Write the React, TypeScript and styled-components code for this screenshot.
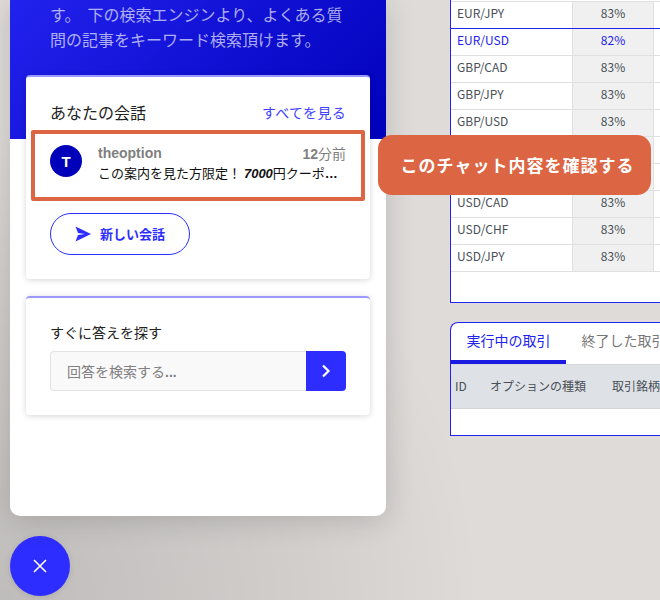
import styled, { createGlobalStyle } from 'styled-components'

const blue = '#2d2dff'
const orange = '#dc6543'
const jp = `'Noto Sans CJK JP', 'Noto Sans', sans-serif`
const latin = `'Liberation Sans', 'Noto Sans CJK JP', sans-serif`

const GlobalStyle = createGlobalStyle`
  html, body { margin: 0; padding: 0; }
  body { font-family: ${jp}; background: #dedbd9; }
`

const Page = styled.div`
  position: relative;
  display: flex;
  width: 660px;
  height: 600px;
  overflow: hidden;
  background:
    radial-gradient(circle at 0 100%, rgba(0, 0, 0, 0.14) 0, rgba(0, 0, 0, 0.06) 300px, rgba(0, 0, 0, 0) 480px),
    #dedbd9;
`

const WidgetColumn = styled.div`
  display: flex;
  flex-direction: column;
  flex: none;
  width: 376px;
  margin-left: 10px;
`

const Messenger = styled.div`
  position: relative;
  height: 516px;
  background: #fff;
  border-radius: 0 0 10px 10px;
  box-shadow: 0 4px 30px rgba(0, 0, 0, 0.16);
`

const Hero = styled.div`
  box-sizing: border-box;
  height: 139px;
  padding: 2px 40px 0;
  background: linear-gradient(135deg, #2222ee 0%, #0000bb 100%);
  color: rgba(255, 255, 255, 0.66);
  font-size: 16px;
  line-height: 25px;
`

const Cards = styled.div`
  display: flex;
  flex-direction: column;
  gap: 17px;
  margin: -64px 16px 0;
`

const Card = styled.section<{ $height: number }>`
  box-sizing: border-box;
  height: ${({ $height }) => $height}px;
  padding: 0 24px;
  background: #fff;
  border-top: 2px solid #9999ff;
  border-radius: 4px;
  box-shadow: 0 1px 6px rgba(0, 0, 0, 0.16);
`

const CardHeader = styled.div`
  display: flex;
  align-items: center;
  justify-content: space-between;
  height: 24px;
  margin-top: 23px;
`

const CardTitle = styled.h2`
  margin: 0;
  font-size: 16px;
  font-weight: 400;
  color: #222;
`

const SeeAll = styled.a`
  font-size: 14px;
  letter-spacing: 0.3px;
  color: #4040ff;
`

const Conversation = styled.div`
  display: flex;
  gap: 16px;
  margin-top: 21px;
  height: 56px;
`

const Avatar = styled.div`
  display: flex;
  align-items: center;
  justify-content: center;
  flex: none;
  width: 32px;
  height: 32px;
  border-radius: 50%;
  background: #0000bb;
  color: #fff;
  font: 700 15px 'Liberation Sans', sans-serif;
`

const ConversationText = styled.div`
  flex: 1;
  min-width: 0;
  margin-top: -2px;
`

const ConversationTop = styled.div`
  display: flex;
  justify-content: space-between;
  height: 20px;
  font-size: 14px;
  line-height: 20px;
  color: #7f7f7f;
`

const Sender = styled.span`
  font: 700 14px/20px 'Liberation Sans', sans-serif;
`

const Digits = styled.b`
  font-family: 'Liberation Sans', sans-serif;
`

const Preview = styled.div`
  overflow: hidden;
  white-space: nowrap;
  text-overflow: ellipsis;
  font-family: ${latin};
  font-size: 13px;
  font-weight: 700;
  line-height: 20px;
  color: #111;
`

const PreviewText = styled.span`
  font-family: ${jp};
  font-weight: 400;
`

const Coupon = styled.b`
  font-family: 'Liberation Sans', sans-serif;
  font-style: italic;
`

const NewChat = styled.button`
  display: flex;
  align-items: center;
  justify-content: center;
  gap: 9px;
  width: 140px;
  height: 42px;
  margin-top: 12px;
  padding: 0 0 1px;
  background: #fff;
  border: 1px solid ${blue};
  border-radius: 21px;
  color: ${blue};
  font: 700 13px ${jp};
`

const SearchLabel = styled.div`
  margin-top: 24px;
  font-size: 14px;
  line-height: 20px;
  color: #222;
`

const SearchRow = styled.div`
  display: flex;
  height: 40px;
  margin-top: 9px;
`

const SearchInput = styled.div`
  flex: 1;
  box-sizing: border-box;
  padding-left: 16px;
  background: #f9f9f9;
  border: 1px solid #e3e3e3;
  border-right: 0;
  border-radius: 4px 0 0 4px;
  color: #808080;
  font-size: 14px;
  line-height: 38px;
`

const SearchDots = styled.b`
  font-family: 'Liberation Sans', sans-serif;
`

const SearchButton = styled.button`
  display: flex;
  align-items: center;
  justify-content: center;
  width: 40px;
  padding: 0;
  background: ${blue};
  border: 0;
  border-radius: 0 4px 4px 0;
`

const Launcher = styled.button`
  display: flex;
  align-items: center;
  justify-content: center;
  width: 60px;
  height: 60px;
  margin-top: 20px;
  padding: 0;
  background: ${blue};
  border: 0;
  border-radius: 50%;
  box-shadow: 0 1px 6px rgba(0, 0, 0, 0.1);
`

const Highlight = styled.div`
  position: absolute;
  top: 130px;
  left: 31px;
  width: 334px;
  height: 71px;
  box-sizing: border-box;
  border: 4px solid ${orange};
  border-radius: 2px;
`

const Callout = styled.div`
  position: absolute;
  top: 135px;
  left: 378px;
  box-sizing: border-box;
  width: 273px;
  height: 60px;
  padding-left: 6px;
  border-radius: 14px;
  background: ${orange};
  color: #fff;
  font-size: 17px;
  font-weight: 700;
  letter-spacing: 1px;
  line-height: 60px;
  text-align: center;
`

const MarketColumn = styled.div`
  display: flex;
  flex-direction: column;
  flex: none;
  width: 320px;
  margin-left: 64px;
  color: #495057;
  font-size: 12px;
`

const RatesPanel = styled.div`
  box-sizing: border-box;
  height: 303px;
  padding-top: 1px;
  background: #fff;
  border: 1px solid #2222ee;
  border-width: 0 0 1px 1px;
`

const RateRow = styled.div<{ $active?: boolean }>`
  display: grid;
  grid-template-columns: 121px 82px 1fr;
  height: 27px;
  box-sizing: border-box;
  border-top: 1px solid ${({ $active }) => ($active ? '#2222ee' : '#e0e0e0')};
  color: ${({ $active }) => ($active ? '#2222ee' : 'inherit')};
  line-height: 22px;

  &:last-child {
    height: 28px;
    border-bottom: 1px solid #e0e0e0;
  }
`

const Pair = styled.div`
  padding-left: 6px;
`

const Payout = styled.div`
  background: #f0f0f0;
  border-left: 1px solid #e0e0e0;
  border-right: 1px solid #e0e0e0;
  text-align: center;
`

const TradesPanel = styled.div`
  box-sizing: border-box;
  height: 114px;
  margin-top: 19px;
  background: #fff;
  border: 1px solid #2222ee;
  border-right: 0;
  border-radius: 8px 0 0 0;
`

const Tabs = styled.div`
  display: flex;
  height: 41px;
  border-bottom: 1px solid #d8d8d8;
`

const Tab = styled.div<{ $active?: boolean }>`
  box-sizing: border-box;
  width: 115px;
  height: 41px;
  padding-top: 7px;
  text-align: center;
  font-size: 14px;
  line-height: 20px;
  color: ${({ $active }) => ($active ? '#2222ee' : '#777')};
  border-bottom: ${({ $active }) => ($active ? '4px solid #1a1ae0' : '0')};
`

const TradesHead = styled.div`
  display: flex;
  align-items: center;
  box-sizing: border-box;
  height: 44px;
  padding: 0 0 2px 4px;
  background: #dee2e6;
  border-bottom: 1px solid #d4d4d4;
  font-size: 12px;
  white-space: nowrap;
`

const HeadCell = styled.span<{ $width: number }>`
  flex: none;
  width: ${({ $width }) => $width}px;
`

const rates = [
  ['EUR/JPY', '83%'],
  ['EUR/USD', '82%'],
  ['GBP/CAD', '83%'],
  ['GBP/JPY', '83%'],
  ['GBP/USD', '83%'],
  ['NZD/USD', '83%'],
  ['USD/AUD', '83%'],
  ['USD/CAD', '83%'],
  ['USD/CHF', '83%'],
  ['USD/JPY', '83%'],
]

export default function App() {
  return (
    <Page>
      <GlobalStyle />
      <WidgetColumn>
        <Messenger>
          <Hero>
            す。&nbsp;&nbsp;下の検索エンジンより、よくある質
            <br />
            問の記事をキーワード検索頂けます。
          </Hero>
          <Cards>
            <Card $height={204}>
              <CardHeader>
                <CardTitle>あなたの会話</CardTitle>
                <SeeAll>すべてを見る</SeeAll>
              </CardHeader>
              <Conversation>
                <Avatar>T</Avatar>
                <ConversationText>
                  <ConversationTop>
                    <Sender>theoption</Sender>
                    <span>
                      <Digits>12</Digits>分前
                    </span>
                  </ConversationTop>
                  <Preview>
                    <PreviewText>
                      この案内を見た方限定！ <Coupon>7000</Coupon>円クーポンプレゼント
                    </PreviewText>
                  </Preview>
                </ConversationText>
              </Conversation>
              <NewChat>
                <svg width="16" height="16" viewBox="0 0 16 16" fill={blue}>
                  <path d="M0.5 0.5 L16 8 L0.5 15.5 L3 9 L10 8 L3 7 Z" />
                </svg>
                新しい会話
              </NewChat>
            </Card>
            <Card $height={119}>
              <SearchLabel>すぐに答えを探す</SearchLabel>
              <SearchRow>
                <SearchInput>
                  回答を検索する<SearchDots>...</SearchDots>
                </SearchInput>
                <SearchButton aria-label="検索">
                  <svg width="10" height="14" viewBox="0 0 10 14" fill="none" stroke="#fff" strokeWidth="2.2">
                    <path d="M2 1.5 L7.5 7 L2 12.5" />
                  </svg>
                </SearchButton>
              </SearchRow>
            </Card>
          </Cards>
        </Messenger>
        <Launcher aria-label="閉じる">
          <svg width="16" height="16" viewBox="0 0 16 16" fill="none" stroke="#fff" strokeWidth="1.6">
            <path d="M2 2 L14 14 M14 2 L2 14" />
          </svg>
        </Launcher>
      </WidgetColumn>
      <Highlight />
      <Callout>このチャット内容を確認する</Callout>
      <MarketColumn>
        <RatesPanel>
          {rates.map(([pair, payout]) => (
            <RateRow key={pair} $active={pair === 'EUR/USD'}>
              <Pair>{pair}</Pair>
              <Payout>{payout}</Payout>
              <div />
            </RateRow>
          ))}
        </RatesPanel>
        <TradesPanel>
          <Tabs>
            <Tab $active>実行中の取引</Tab>
            <Tab>終了した取引</Tab>
          </Tabs>
          <TradesHead>
            <HeadCell $width={35}>ID</HeadCell>
            <HeadCell $width={122}>オプションの種類</HeadCell>
            <HeadCell $width={80}>取引銘柄</HeadCell>
          </TradesHead>
        </TradesPanel>
      </MarketColumn>
    </Page>
  )
}
